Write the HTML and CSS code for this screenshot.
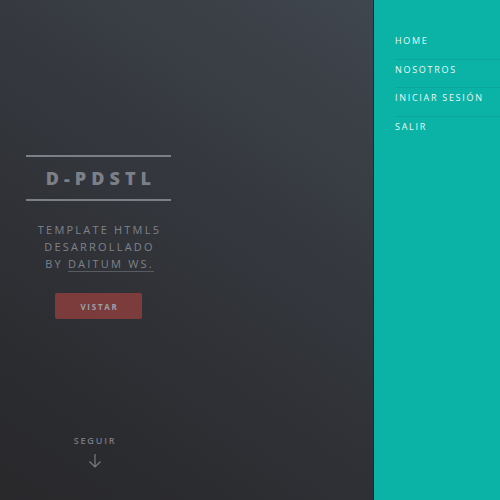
FILE: index.html
```html
<!DOCTYPE html>
<html lang="es">
<head>
<meta charset="utf-8">
<title>D-PDSTL</title>
<link rel="stylesheet" href="styles.css">
</head>
<body>
<div class="page">
  <main class="banner">
    <div class="inner">
      <h1 class="title">D-PDSTL</h1>
      <p class="subtitle">Template HTML5<br>Desarrollado<br>by <a href="#">Daitum WS.</a></p>
      <a class="button" href="#">Vistar</a>
    </div>
    <a class="more" href="#">
      <span>Seguir</span>
      <svg width="16" height="16" viewBox="0 0 16 16" fill="none" stroke="currentColor" stroke-width="1.2"><path d="M8 1v13M2.5 8.5L8 14l5.5-5.5"/></svg>
    </a>
  </main>
  <nav class="menu">
    <ul>
      <li><a href="#">Home</a></li>
      <li><a href="#">Nosotros</a></li>
      <li><a href="#">Iniciar Sesión</a></li>
      <li><a href="#">Salir</a></li>
    </ul>
  </nav>
</div>
</body>
</html>
```
FILE: styles.css
```css
html, body {
  margin: 0;
  padding: 0;
  width: 500px;
  height: 500px;
  overflow: hidden;
  font-family: "Open Sans", "Liberation Sans", sans-serif;
}
.page {
  display: flex;
  width: 500px;
  height: 500px;
}
.banner {
  width: 374px;
  height: 500px;
  flex: none;
  display: flex;
  flex-direction: column;
  background: linear-gradient(215deg, #40464e 0%, #33363c 45%, #2b2c30 80%, #29292c 100%);
  box-shadow: inset -1px 0 0 #262a2e;
}
.inner {
  width: 197px;
  margin-top: 155px;
  display: flex;
  flex-direction: column;
  align-items: center;
}
.title {
  margin: 0;
  width: 145px;
  box-sizing: border-box;
  border-top: 2px solid #7b8088;
  border-bottom: 2px solid #7b8088;
  padding: 9px 0 9px 5px;
  text-align: center;
  font-size: 18px;
  font-weight: 800;
  letter-spacing: 0.28em;
  color: #7b8088;
  line-height: 24px;
}
.subtitle {
  margin: 20px 0 0;
  text-align: center;
  font-size: 11px;
  line-height: 17px;
  letter-spacing: 0.2em;
  padding-left: 2px;
  text-transform: uppercase;
  color: #7e838b;
}
.subtitle a {
  color: inherit;
  text-decoration: none;
  border-bottom: 1px solid #575b62;
}
.button {
  margin-top: 21px;
  width: 87px;
  height: 26px;
  box-sizing: border-box;
  display: flex;
  align-items: center;
  justify-content: center;
  padding-left: 2px;
  background: #7c3c3c;
  border-radius: 2px;
  color: #9aa0a8;
  font-size: 8px;
  font-weight: 700;
  letter-spacing: 0.22em;
  text-transform: uppercase;
  text-decoration: none;
}
.more {
  width: 190px;
  margin-top: 115px;
  display: flex;
  flex-direction: column;
  align-items: center;
  gap: 6px;
  color: #777c83;
  text-decoration: none;
  font-size: 9px;
  font-weight: 600;
  letter-spacing: 0.2em;
  text-transform: uppercase;
}
.menu {
  flex: 1;
  background: #0ab3a6;
  padding: 31px 0 0 21px;
}
.menu ul {
  list-style: none;
  margin: 0;
  padding: 0;
}
.menu li {
  border-top: 1px solid #0aa599;
}
.menu li:first-child {
  border-top: 0;
}
.menu a {
  display: block;
  height: 27.5px;
  line-height: 20px;
  color: #e8f8f6;
  text-decoration: none;
  font-size: 9px;
  font-weight: 400;
  letter-spacing: 0.19em;
  text-transform: uppercase;
}
```
